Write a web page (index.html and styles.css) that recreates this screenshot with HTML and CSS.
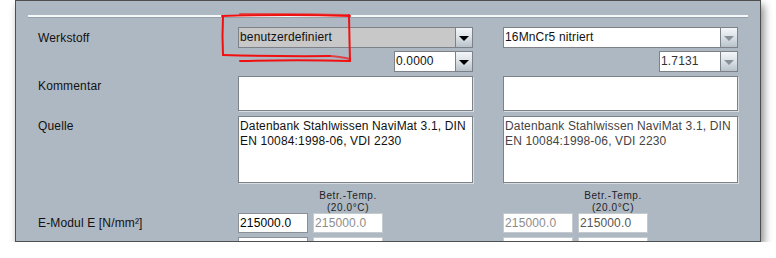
FILE: index.html
```html
<!DOCTYPE html>
<html lang="de">
<head>
    <meta charset="UTF-8" />
    <title>Werkstoff</title>
    <link rel="stylesheet" href="styles.css">
</head>
<body>
<div class="panel">
    <div class="separator"></div>

    <div class="row row-werkstoff">
        <div class="label">Werkstoff</div>
        <div class="combo combo-gray">
            <span class="combo-text">benutzerdefiniert</span>
            <span class="combo-btn"><span class="arrow"></span></span>
        </div>
        <div></div>
        <div class="combo">
            <span class="combo-text">16MnCr5 nitriert</span>
            <span class="combo-btn disabled"><span class="arrow"></span></span>
        </div>
    </div>

    <div class="row row-nummer">
        <div></div>
        <div class="combo combo-small">
            <span class="combo-text">0.0000</span>
            <span class="combo-btn"><span class="arrow"></span></span>
        </div>
        <div></div>
        <div class="combo combo-small">
            <span class="combo-text text-muted">1.7131</span>
            <span class="combo-btn disabled"><span class="arrow"></span></span>
        </div>
    </div>

    <div class="row row-kommentar">
        <div class="label label-top">Kommentar</div>
        <div class="area area-kommentar"></div>
        <div></div>
        <div class="area area-kommentar"></div>
    </div>

    <div class="row row-quelle">
        <div class="label label-top">Quelle</div>
        <div class="area area-quelle">Datenbank Stahlwissen NaviMat 3.1, DIN EN 10084:1998-06, VDI 2230</div>
        <div></div>
        <div class="area area-quelle text-dim">Datenbank Stahlwissen NaviMat 3.1, DIN EN 10084:1998-06, VDI 2230</div>
    </div>

    <div class="row row-temp">
        <div></div>
        <div class="pair">
            <div></div>
            <div class="temp">Betr.-Temp.<br>(20.0°C)</div>
        </div>
        <div></div>
        <div class="pair">
            <div></div>
            <div class="temp">Betr.-Temp.<br>(20.0°C)</div>
        </div>
    </div>

    <div class="row row-field">
        <div class="label">E-Modul E [N/mm²]</div>
        <div class="pair">
            <div class="field">215000.0</div>
            <div class="field disabled">215000.0</div>
        </div>
        <div></div>
        <div class="pair">
            <div class="field disabled">215000.0</div>
            <div class="field soft">215000.0</div>
        </div>
    </div>

    <div class="row row-field">
        <div></div>
        <div class="pair">
            <div class="field"></div>
            <div class="field disabled"></div>
        </div>
        <div></div>
        <div class="pair">
            <div class="field disabled"></div>
            <div class="field soft"></div>
        </div>
    </div>

    <!-- rote Markierung -->
    <svg class="marker" width="140" height="56" viewBox="216 9 140 56">
        <g fill="none" stroke="#f01010" stroke-width="2" stroke-linecap="round">
            <path d="M223 17 L222.5 36 L223 55" />
            <path d="M222 16 Q290 14 350 16" />
            <path d="M240 14 Q300 13.5 349 15" stroke-opacity="0.6" />
            <path d="M349 15 L349.5 40 L350 61" />
            <path d="M223 55 Q280 56.5 330 56" />
            <path d="M240 61 Q300 59.5 350 61" />
            <path d="M330 56 Q342 57 350 59" stroke-opacity="0.7" />
        </g>
    </svg>
</div>
</body>
</html>
```

FILE: styles.css
```css
* {
    box-sizing: border-box;
}
body {
    margin: 0;
    background-color: #ffffff;
    font-family: "Liberation Sans", Arial, sans-serif;
    font-size: 12px;
    letter-spacing: 0.15px;
    color: #111;
}
.panel {
    position: relative;
    margin-left: 15px;
    width: 746px;
    height: 242px;
    background-color: #aeb8c3;
    border: 1px solid #4e4e4e;
    box-shadow: 3px 5px 8px rgba(0, 0, 0, 0.45);
    overflow: hidden;
}
.separator {
    margin: 14px 0 0 12px;
    width: 720px;
    height: 3px;
    border-top: 2px solid #f6f7f8;
    border-bottom: 1px solid #96a0aa;
}
.row {
    display: grid;
    grid-template-columns: 200px 235px 30px 235px;
    padding-left: 22px;
}
.row-werkstoff {
    margin-top: 9px;
    align-items: center;
}
.row-nummer {
    margin-top: 3px;
}
.row-kommentar {
    margin-top: 4px;
}
.row-quelle {
    margin-top: 5px;
}
.row-temp {
    margin-top: 5px;
}
.row-field {
    margin-top: 0;
    align-items: center;
}
.row-field + .row-field {
    margin-top: 4px;
}
.label {
    color: #111;
}
.label-top {
    padding-top: 3px;
}

/* combobox */
.combo {
    display: flex;
    height: 21px;
    background-color: #ffffff;
    border: 1px solid #7c8287;
}
.combo-gray {
    background-color: #c8c8c8;
}
.combo-small {
    width: 79px;
    justify-self: end;
}
.combo-text {
    flex: 1;
    padding-left: 1px;
    line-height: 19px;
    white-space: nowrap;
    overflow: hidden;
}
.combo-btn {
    width: 17px;
    display: flex;
    align-items: center;
    justify-content: center;
    border-left: 1px solid #7c8287;
    background: linear-gradient(#f4f7f9, #dde3e8 45%, #b9c2cb);
}
.arrow {
    width: 0;
    height: 0;
    border-left: 5px solid transparent;
    border-right: 5px solid transparent;
    border-top: 5px solid #000;
    margin-top: 1px;
}
.combo-btn.disabled .arrow {
    border-top-color: #8a9299;
}
.text-muted {
    color: #333;
}

/* textareas */
.area {
    background-color: #ffffff;
    border: 1px solid #7c8287;
    box-shadow: 1px 1px 0 #d8dde2;
    padding: 2px 1px;
    line-height: 15px;
}
.area-kommentar {
    height: 35px;
}
.area-quelle {
    height: 67px;
}
.text-dim {
    color: #444;
}

/* Temperaturspalte */
.pair {
    display: grid;
    grid-template-columns: 70px 70px;
    gap: 5px;
}
.temp {
    text-align: center;
    font-size: 10px;
    letter-spacing: 0.6px;
    line-height: 12px;
    color: #222;
    height: 25px;
    padding-top: 2px;
}
.field {
    height: 20px;
    background-color: #ffffff;
    border: 1px solid #8b9096;
    padding-left: 1px;
    line-height: 18px;
    color: #000;
}
.field.disabled {
    border-color: #c5cacf;
    color: #8c8c8c;
}
.field.soft {
    border-color: #c5cacf;
    color: #555;
}

.marker {
    position: absolute;
    left: 200px;
    top: 8px;
}
```
